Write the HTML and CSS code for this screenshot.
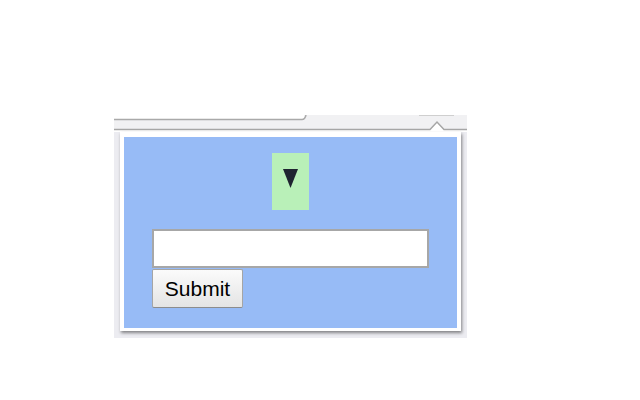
FILE: index.html
```html
<!DOCTYPE html>
<html>
<head>
<meta charset="utf-8">
<link rel="stylesheet" href="styles.css">
</head>
<body>
<div class="frame">
  <svg class="chrome" width="353" height="17" viewBox="0 0 353 17">
    <rect x="0" y="0" width="353" height="17" fill="#f1f1f3"/>
    <rect x="0" y="0" width="190" height="4" fill="#ffffff"/>
    <path d="M0 4.5 H188 Q191 4.5 192 0" fill="none" stroke="#a9a9a9" stroke-width="1.5"/>
    <line x1="305" y1="0.5" x2="340" y2="0.5" stroke="#cfcfcf" stroke-width="1"/>
    <path d="M0 14.5 H316 L323 7 L330 14.5 H353 V17 H0 Z" fill="#ffffff"/>
    <path d="M0 14.5 H316 L323 7 L330 14.5 H353" fill="none" stroke="#a6a6a6" stroke-width="1.5"/>
  </svg>
  <div class="panel">
    <div class="content">
      <div class="toggle">
        <svg width="15" height="19" viewBox="0 0 15 19"><polygon points="0,0 15,0 7.5,19" fill="#1f2430"/></svg>
      </div>
      <form class="form">
        <input class="field" type="text">
        <button class="submit" type="button">Submit</button>
      </form>
    </div>
  </div>
</div>
</body>
</html>
```
FILE: styles.css
```css
html, body {
  margin: 0;
  padding: 0;
  background: #ffffff;
}
.frame {
  margin: 115px 0 0 114px;
  width: 353px;
  height: 223px;
  background: #ececf1;
  display: flex;
  flex-direction: column;
}
.chrome {
  display: block;
  flex: none;
}
.panel {
  margin-left: 6px;
  width: 341px;
  height: 199px;
  box-sizing: border-box;
  background: #ffffff;
  padding: 5px 4px 3px 4px;
  box-shadow: 1px 2px 3px rgba(0, 0, 0, 0.45);
}
.content {
  height: 100%;
  background: #97bbf6;
  display: flex;
  flex-direction: column;
  align-items: center;
  padding-top: 16px;
  box-sizing: border-box;
}
.toggle {
  width: 37px;
  height: 57px;
  box-sizing: border-box;
  background: #b9f0b8;
  display: flex;
  justify-content: center;
  padding-top: 16px;
}
.toggle svg {
  display: block;
}
.form {
  align-self: stretch;
  margin: 19px 0 0 28px;
  display: flex;
  flex-direction: column;
  align-items: flex-start;
  gap: 1px;
}
.field {
  width: 277px;
  height: 39px;
  box-sizing: border-box;
  border: 2px solid #a7a7a7;
  background: #ffffff;
  margin: 0;
  padding: 0;
}
.submit {
  width: 91px;
  height: 39px;
  box-sizing: border-box;
  margin: 0;
  padding: 0;
  border: 1px solid #a5a5a5;
  border-bottom-color: #8c8c8c;
  border-radius: 2px;
  background: linear-gradient(#fbfbfb, #e4e4e4);
  font-family: "Liberation Sans", Arial, sans-serif;
  font-size: 21px;
  color: #000000;
}
```
